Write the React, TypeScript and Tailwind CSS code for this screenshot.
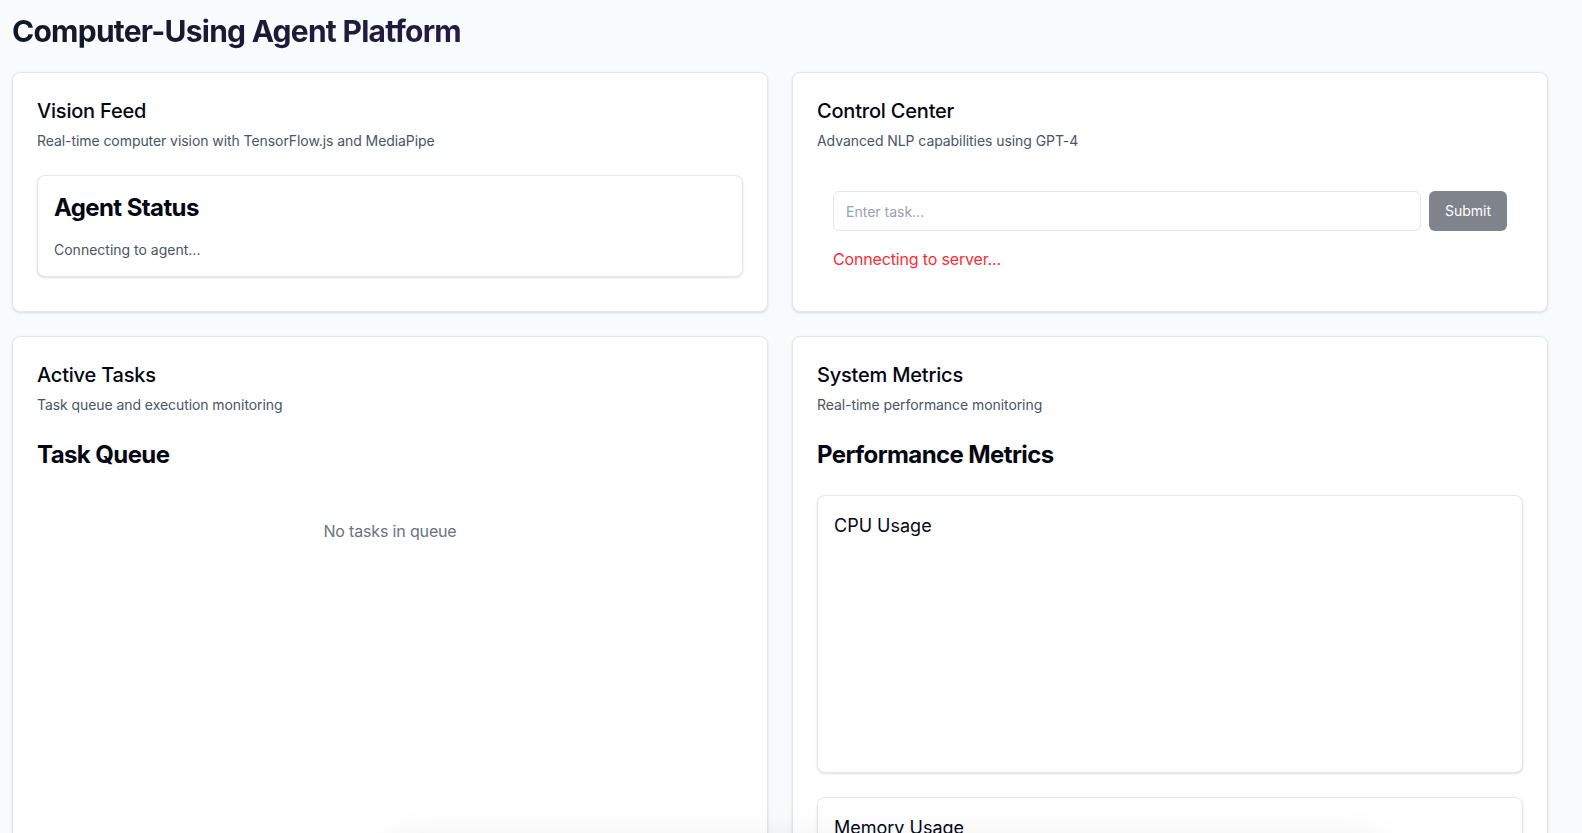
import { useState } from "react";

function Card({ title, desc, children }: { title: string; desc: string; children: React.ReactNode }) {
  return (
    <div className="rounded-lg border border-gray-200 bg-white shadow-sm">
      <div className="flex flex-col space-y-1.5 p-6">
        <h3 className="text-xl font-medium tracking-[-0.01em] text-gray-950">{title}</h3>
        <p className="text-sm tracking-[-0.005em] text-gray-600">{desc}</p>
      </div>
      <div className="p-6 pt-0">{children}</div>
    </div>
  );
}

function MetricBox({ label }: { label: string }) {
  return (
    <div className="rounded-lg border border-gray-200 bg-white p-4 shadow-sm">
      <h4 className="mb-4 text-lg font-normal text-gray-950">{label}</h4>
      <div className="h-[200px] w-full"></div>
    </div>
  );
}

function App() {
  const [task, setTask] = useState<string>("");

  return (
    <div className="min-h-screen bg-gray-50 p-3 font-['Inter',sans-serif]">
      <div className="max-w-[1536px]">
        <h1 className="mb-6 bg-gradient-to-r from-gray-900 to-purple-900 bg-clip-text pt-px text-3xl font-bold tracking-tight text-transparent">
          Computer-Using Agent Platform
        </h1>
        <div className="-mt-px grid grid-cols-2 gap-6">
          <Card title="Vision Feed" desc="Real-time computer vision with TensorFlow.js and MediaPipe">
            <div className="rounded-lg border border-gray-200 bg-white p-4 shadow-sm">
              <h2 className="mb-4 text-2xl font-bold tracking-tight text-gray-950">Agent Status</h2>
              <p className="text-sm text-gray-600">Connecting to agent...</p>
            </div>
          </Card>

          <Card title="Control Center" desc="Advanced NLP capabilities using GPT-4">
            <div className="p-4">
              <div className="flex gap-2">
                <input
                  type="text"
                  value={task}
                  onChange={(e) => setTask(e.target.value)}
                  placeholder="Enter task..."
                  className="h-10 flex-1 rounded-md border border-gray-200 bg-white px-3 text-sm text-gray-900 placeholder:text-gray-400 focus:outline-none"
                />
                <button className="h-10 rounded-md bg-[#7f838c] px-4 text-sm text-white">Submit</button>
              </div>
              <p className="mt-4 text-base tracking-[-0.01em] text-red-500">Connecting to server...</p>
            </div>
          </Card>

          <Card title="Active Tasks" desc="Task queue and execution monitoring">
            <h2 className="mb-4 text-2xl font-bold tracking-tight text-gray-950">Task Queue</h2>
            <div className="py-8 text-center text-base tracking-[-0.01em] text-gray-500">No tasks in queue</div>
          </Card>

          <Card title="System Metrics" desc="Real-time performance monitoring">
            <h2 className="mb-6 text-2xl font-bold tracking-tight text-gray-950">Performance Metrics</h2>
            <div className="space-y-6">
              <MetricBox label="CPU Usage" />
              <MetricBox label="Memory Usage" />
              <MetricBox label="Network Activity" />
            </div>
          </Card>
        </div>
      </div>
      <div className="fixed left-[390px] top-[850px] h-16 w-[990px] rounded-xl bg-white shadow-[0_0_45px_rgba(0,0,0,0.14)]"></div>
    </div>
  );
}

export default App;
